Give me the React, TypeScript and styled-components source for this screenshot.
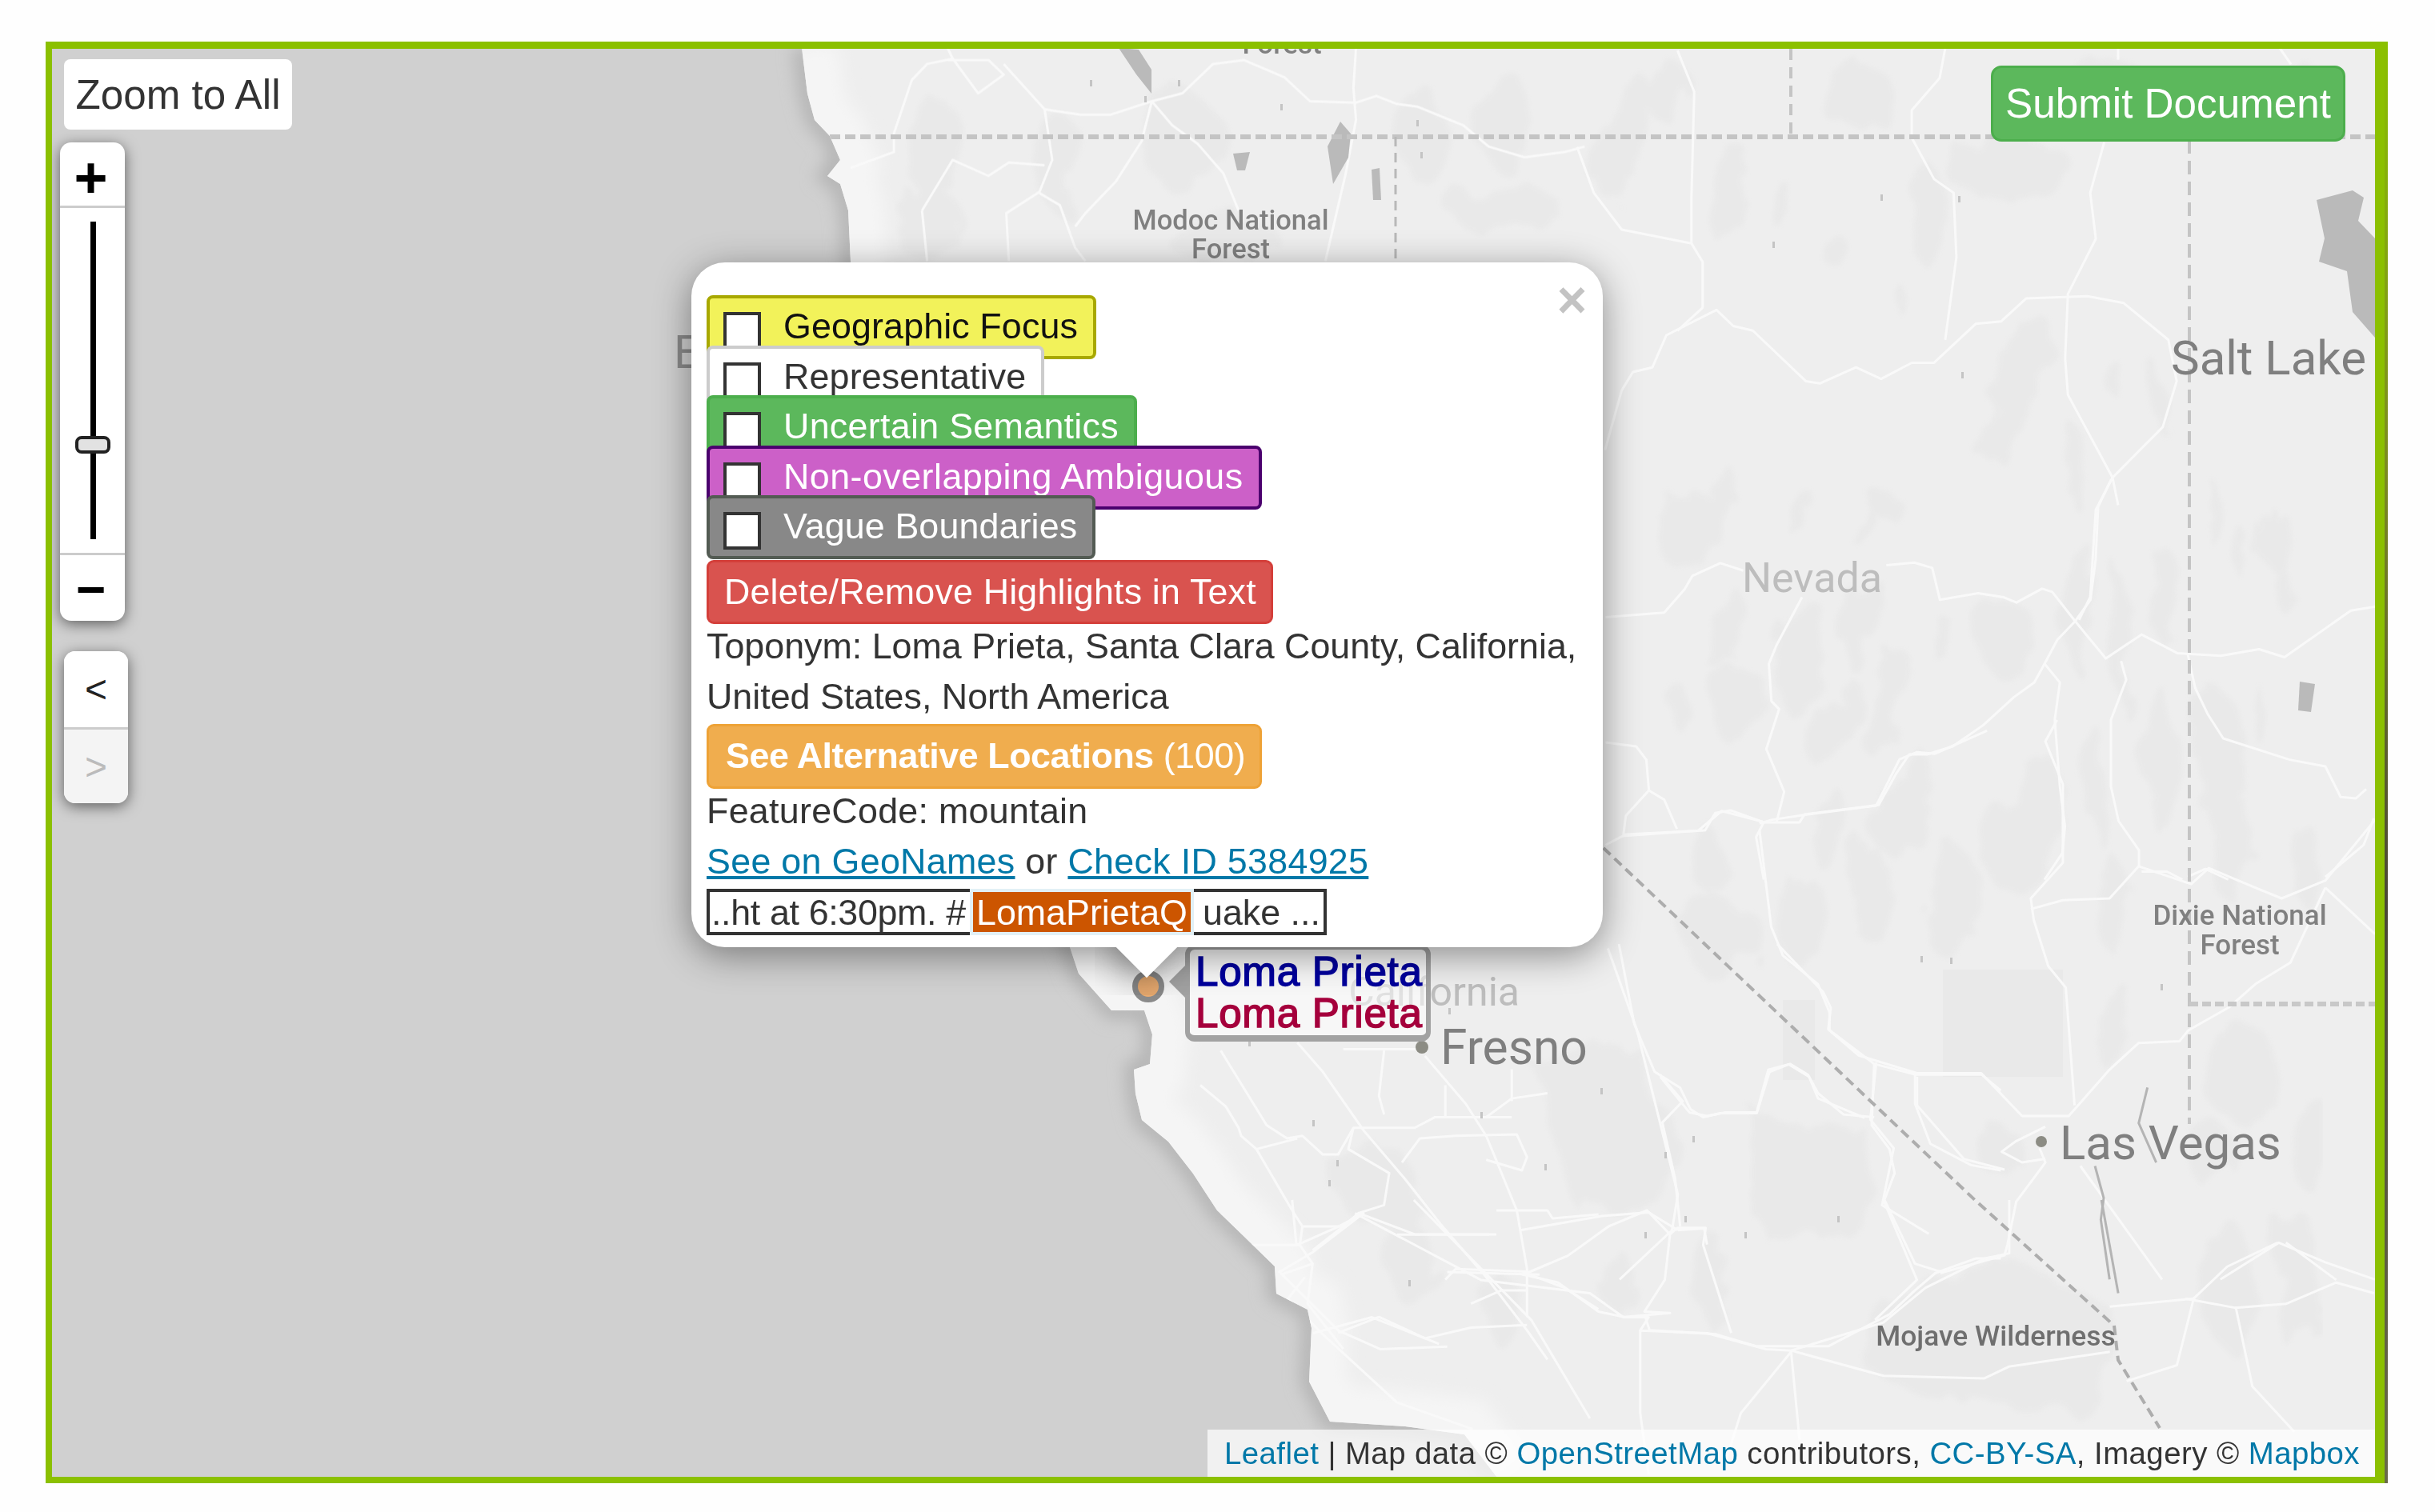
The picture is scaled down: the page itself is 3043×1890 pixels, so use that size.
import React from "react";
import styled, { createGlobalStyle } from "styled-components";

const Global = createGlobalStyle`
  html, body { margin: 0; padding: 0; background: #fefefe; }
  body { font-family: "Liberation Sans", Arial, sans-serif; color: #333; }
`;

const Frame = styled.div`
  position: relative;
  box-sizing: content-box;
  width: 2903px;
  height: 1785px;
  margin: 52px 0 0 57px;
  border: solid #8bc000;
  border-width: 9px 12px 8px 8px;
  &::after {
    content: "";
    position: absolute;
    top: -9px;
    bottom: -8px;
    right: -16px;
    width: 4px;
    background: linear-gradient(#8bc000, #7c8a20 30%, #4a4636 60%, #6a6a4a);
  }
`;

const MapArea = styled.div`
  position: relative;
  width: 100%;
  height: 100%;
  overflow: hidden;
  background: #d0d0d0;
`;

const MapSvg = styled.svg`
  position: absolute;
  inset: 0;
  width: 100%;
  height: 100%;
`;

const Road = styled.path`
  fill: none;
  stroke: #f9f9f9;
  stroke-width: 3;
  stroke-linejoin: round;
  vector-effect: non-scaling-stroke;
`;

const RiverLine = styled.path`
  fill: none;
  stroke: #b4b4b4;
  stroke-width: 3;
  vector-effect: non-scaling-stroke;
`;

const Border = styled.path<{ $w: number; $dash: string; $c: string }>`
  fill: none;
  stroke: ${(p) => p.$c};
  stroke-width: ${(p) => p.$w};
  stroke-dasharray: ${(p) => p.$dash};
`;

const Label = styled.text<{ $size: number; $color: string; $weight?: number; $sp?: number }>`
  font-family: Roboto, "Liberation Sans", sans-serif;
  font-size: ${(p) => p.$size}px;
  font-weight: ${(p) => p.$weight ?? 400};
  fill: ${(p) => p.$color};
  letter-spacing: ${(p) => p.$sp ?? 0}px;
`;

const ZoomAll = styled.button`
  position: absolute;
  left: 15px;
  top: 13px;
  width: 285px;
  height: 88px;
  padding: 0;
  border: 0;
  border-radius: 8px;
  background: #fff;
  font: 51.2px "Liberation Sans", sans-serif;
  color: #333;
`;

const ControlBar = styled.div<{ $left: number; $top: number; $width: number }>`
  position: absolute;
  left: ${(p) => p.$left}px;
  top: ${(p) => p.$top}px;
  width: ${(p) => p.$width}px;
  display: flex;
  flex-direction: column;
  border-radius: 14px;
  overflow: hidden;
  background: #fff;
  box-shadow: 0 4px 18px rgba(0, 0, 0, 0.55);
`;

const ZoomButton = styled.div<{ $h: number; $size: number; $pt: number }>`
  height: ${(p) => p.$h}px;
  display: flex;
  align-items: center;
  justify-content: center;
  box-sizing: border-box;
  font: bold ${(p) => p.$size}px/1 "Liberation Sans", sans-serif;
  color: #000;
  padding: ${(p) => p.$pt}px 4px 0 0;
`;

const SliderArea = styled.div`
  position: relative;
  height: 437px;
  border-top: 3px solid #ccc;
  border-bottom: 3px solid #ccc;
  box-sizing: border-box;
`;

const SliderTrack = styled.div`
  position: absolute;
  left: 38px;
  top: 17px;
  width: 7px;
  height: 397px;
  background: #000;
`;

const SliderKnob = styled.div`
  position: absolute;
  left: 19px;
  top: 285px;
  width: 44px;
  height: 22px;
  box-sizing: border-box;
  border: 4px solid #222;
  border-radius: 8px;
  background: #e2e2e2;
`;

const NavButton = styled.div<{ $disabled?: boolean }>`
  height: 95px;
  display: flex;
  align-items: center;
  justify-content: center;
  font: 48px "Liberation Sans", sans-serif;
  color: ${(p) => (p.$disabled ? "#bbb" : "#222")};
  background: ${(p) => (p.$disabled ? "#f4f4f4" : "#fff")};
  border-top: ${(p) => (p.$disabled ? "3px solid #ccc" : "0")};
  box-sizing: border-box;
`;

const Submit = styled.button`
  position: absolute;
  right: 37px;
  top: 21px;
  width: 443px;
  height: 95px;
  padding: 0;
  border: 3px solid #4cae4c;
  border-radius: 13px;
  background: #5cb85c;
  color: #fff;
  font: 51.2px "Liberation Sans", sans-serif;
`;

const Attribution = styled.div`
  position: absolute;
  right: 0;
  bottom: 0;
  width: 1459px;
  height: 59px;
  box-sizing: border-box;
  padding-right: 19px;
  background: rgba(255, 255, 255, 0.7);
  color: #333;
  font: 38.4px/59px "Liberation Sans", sans-serif;
  letter-spacing: 0.44px;
  text-align: right;
  white-space: nowrap;
`;

const MapLink = styled.span`
  color: #0078a8;
`;

const Marker = styled.div`
  position: absolute;
  left: 1350px;
  top: 1152px;
  width: 40px;
  height: 40px;
  box-sizing: border-box;
  border: 7px solid #8a8a8a;
  border-radius: 50%;
  background: #e9ab70;
`;

const Tooltip = styled.div`
  position: absolute;
  left: 1416px;
  top: 1120px;
  width: 307px;
  height: 121px;
  box-sizing: border-box;
  padding: 2px 0 0 7px;
  border: 6px solid #a2a2a2;
  border-bottom-width: 8px;
  border-radius: 12px;
  background: rgba(255, 255, 255, 0.55);
  font: 51.2px/52px "Liberation Sans", sans-serif;
  letter-spacing: 0.7px;
  -webkit-text-stroke: 1.5px currentColor;
  white-space: nowrap;
  &::before {
    content: "";
    position: absolute;
    left: -26px;
    top: 20px;
    border: solid transparent;
    border-width: 20px 20px 20px 0;
    border-right-color: #a2a2a2;
  }
`;

const TipLine = styled.div<{ $c: string }>`
  color: ${(p) => p.$c};
`;

const Popup = styled.div`
  position: absolute;
  left: 799px;
  top: 267px;
  width: 1139px;
  height: 856px;
  box-sizing: border-box;
  padding: 41px 19px 0;
  border-radius: 42px;
  background: #fff;
  box-shadow: 0 10px 46px rgba(0, 0, 0, 0.42);
  font: 44.8px/62.72px "Liberation Sans", sans-serif;
  color: #333;
  display: flex;
  flex-direction: column;
  align-items: flex-start;
`;

const Close = styled.div`
  position: absolute;
  top: 18px;
  right: 20px;
  font: bold 64px/58px "Liberation Sans", sans-serif;
  color: #c3c3c3;
`;

const TipClip = styled.div`
  position: absolute;
  left: 504px;
  top: 856px;
  width: 130px;
  height: 60px;
  overflow: hidden;
`;

const TipSquare = styled.div`
  width: 54px;
  height: 54px;
  margin: -27px auto 0;
  transform: rotate(45deg);
  background: #fff;
  box-shadow: 0 10px 46px rgba(0, 0, 0, 0.42);
`;

const Tag = styled.label<{ $bg: string; $border: string; $color: string; $sp?: number }>`
  display: flex;
  align-items: flex-start;
  box-sizing: border-box;
  height: 80px;
  margin-bottom: -17.4px;
  padding-right: 19px;
  border: 4px solid ${(p) => p.$border};
  border-radius: 8px;
  background: ${(p) => p.$bg};
  color: ${(p) => p.$color};
  letter-spacing: ${(p) => p.$sp ?? 0}px;
  line-height: 62.72px;
  white-space: nowrap;
`;

const Check = styled.span`
  flex: none;
  box-sizing: border-box;
  width: 47px;
  height: 47px;
  margin: 17px 28px 0 17px;
  border: 4px solid #333;
  background: #fff;
`;

const TagText = styled.span`
  margin-top: 3px;
`;

const ActionButton = styled.div<{ $bg: string; $border: string; $mt: number; $h: number; $sp: number; $pl: number }>`
  box-sizing: border-box;
  height: ${(p) => p.$h}px;
  margin-top: ${(p) => p.$mt}px;
  padding: 0 18px 0 ${(p) => p.$pl}px;
  border: 3px solid ${(p) => p.$border};
  border-radius: 9px;
  background: ${(p) => p.$bg};
  color: #fff;
  letter-spacing: ${(p) => p.$sp}px;
  line-height: ${(p) => p.$h - 8}px;
  white-space: nowrap;
`;

const Strong = styled.b`
  font-weight: 700;
`;

const TextLine = styled.div<{ $mt?: number; $sp?: number }>`
  margin-top: ${(p) => p.$mt ?? 0}px;
  letter-spacing: ${(p) => p.$sp ?? 0}px;
  white-space: nowrap;
`;

const Anchor = styled.a`
  color: #0078a8;
  text-decoration: underline;
`;

const ContextRow = styled.div`
  display: flex;
  height: 58px;
  margin-top: 3px;
  line-height: 58px;
  white-space: nowrap;
`;

const ContextPart = styled.span<{ $side: "left" | "right" }>`
  box-sizing: border-box;
  width: ${(p) => (p.$side === "left" ? 329 : 166)}px;
  padding: ${(p) => (p.$side === "left" ? "0 0 0 2px" : "0 0 0 11px")};
  letter-spacing: ${(p) => (p.$side === "left" ? -0.35 : 0)}px;
  border: 4px solid #333;
  border-${(p) => (p.$side === "left" ? "right" : "left")}: 0;
  line-height: 50px;
`;

const Highlight = styled.span`
  box-sizing: border-box;
  width: 280px;
  padding-left: 4px;
  border: 4px solid #e2f0f6;
  background: #cc5500;
  color: #fff;
  line-height: 50px;
`;

const roads4 = [
  "30 320 L60 420 L110 500 L235 530 L255 570 L255 670 L210 720",
  "80 980 L110 850 L130 810 L165 800 L190 730 L280 675 L310 710 L345 720 L440 830 L465 835 L530 800 L575 825 L630 790 L670 790 L745 705 L790 700 L835 650 L945 645 L1010 660 L1090 740 L1105 830 L1080 930 L990 1040 L960 1110 L950 1300 L930 1350",
  "210 110 L240 200 L235 430 L235 530",
  "690 105 L680 170 L630 240 L630 300 L670 390 L705 420 L710 560 L690 740",
  "975 310 L950 420 L960 520 L910 640 L905 780 L910 860 L990 1040 L1000 1100",
  "1000 105 L1000 130",
  "1290 105 L1310 140",
];
const roads11 = [
  "10 515 L125 498 L165 410 L180 360 L235 312 L280 340",
  "560 320 L615 310 L650 330 L665 450 L740 425 L790 440 L815 460 L865 408 L885 420 L930 530 L990 670 L1060 580 L1130 650 L1215 660 L1290 635 L1340 665 L1470 490 L1518 475",
  "395 440 L345 620 L330 690 L335 830 L350 860 L325 1010 L360 1170 L345 1285",
  "930 530 L895 600 L870 690 L850 760 L810 815 L790 850 L750 920 L690 1000 L640 1030 L605 1030 L580 1100 L545 1220 L400 1255 L390 1285 L320 1285 L255 1240 L225 1250 L205 1315 L50 1330 L10 1370",
  "95 1165 L90 1050 L70 1000 L10 985",
  "95 1165 L50 1260 L45 1330",
  "95 1165 L125 1200 L150 1310",
  "320 1285 L305 1340 L320 1500",
  "870 690 L900 760 L890 900 L900 1150 L910 1300 L905 1400 L870 1500",
  "1000 0 L975 100 L970 300 L960 450 L930 530",
  "1020 680 L1030 750 L1000 900 L1000 1150 L1015 1280 L1055 1390 L1055 1450",
  "1150 650 L1165 780 L1190 880 L1220 970 L1350 1050 L1420 1075 L1450 1190 L1480 1195 L1500 1160",
  "1515 1270 L1495 1370 L1420 1490",
  "1060 1470 L1110 1470 L1140 1500",
  "1150 1490 L1185 1460 L1230 1500",
];
const roads6 = [
  "410 290 L430 280 L490 265 L610 240 L650 110 L680 90 L710 95 L800 30",
  "175 325 L305 310 L345 255 L415 285",
  "410 310 L430 580 L450 660 L510 740 L530 820 L530 870 L580 940 L680 990 L790 990 L860 1110 L940 1110 L1010 980 L1060 905 L1130 900 L1145 870 L1215 805 L1260 740 L1320 680 L1380 470",
  "875 530 L930 505 L1010 500 L1060 410 L1150 460 L1180 415 L1260 470 L1305 500 L1380 450 L1465 280",
  "1380 470 L1465 600",
  "950 1080 L935 750 L905 690 L880 560 L875 500 L930 400 L930 180 L900 60 L920 0",
  "150 640 L200 870 L270 1330 L260 1430 L170 1568",
  "270 1430 L315 1425 L320 1470",
  "610 960 L600 1120 L640 1200 L620 1360 L700 1440",
  "680 1000 L680 1080 L760 1230 L830 1260",
  "900 1140 L850 1180 L825 1210 L860 1240 L900 1230",
  "890 1200 L900 1240 L850 1350 L835 1470 L830 1500 L720 1550",
  "960 1250 L1100 1568",
  "240 1000 L290 1100 L320 1110 L350 1100 L405 1100 L425 980 L460 965 L495 1000 L510 1060 L590 1115",
  "0 1430 L140 1390 L220 1380 L270 1430",
  "1200 1568 L1300 1465 L1380 1520 L1465 1568",
];
const roads10 = [
  "190 370 L240 480 L320 700 L400 880 L470 1050 L560 1250 L640 1450 L680 1560",
  "440 420 L520 600 L560 720 L620 1000 L640 1220 L640 1400",
  "40 400 L130 680 L170 730 L200 720 L240 790 L270 790 L300 690 L320 690 L420 690 L460 650 L610 650",
  "0 530 L50 610 L75 690 L80 720 L110 770 L190 730",
  "110 770 L180 1000 L200 1060 L280 1060 L310 1010 L420 1090 L580 1090",
  "200 1060 L195 1130 L220 1200 L160 1240",
  "195 1130 L100 1130",
  "280 1060 L220 1150",
  "220 1200 L210 1350 L280 1520",
  "300 690 L290 770 L370 860 L360 980 L310 1010",
  "395 820 L430 730 L500 720 L620 715 L640 800 L630 850 L560 810",
  "360 640 L350 570 L360 400",
  "280 395 L430 395",
  "480 530 L480 650 L560 650 L610 580 L680 560",
  "610 470 L610 590",
  "630 1240 L700 1270 L780 1380 L830 1400 L920 1385 L870 1380 L910 1260 L920 1090 L875 1000 L800 1060 L720 1170 L640 1235",
  "870 1390 L880 1450 L1010 1465 L1090 1510 L1230 1510 L1350 1390 L1400 1300 L1440 1235 L1520 1180 L1568 1180",
  "920 1090 L935 1065 L990 1065 L985 1130 L1040 1460",
  "480 1260 L500 1220 L640 1230",
  "530 1350 L590 1300 L640 1300",
  "270 1460 L350 1400 L440 1480 L530 1440 L640 1430",
  "580 1000 L680 1000 L690 1030 L780 1015",
  "820 0 L850 300 L890 480 L940 540 L960 620 L985 650 L1020 635 L1090 635 L1115 480 L1155 450 L1190 490 L1210 560 L1260 640 L1320 650",
  "900 490 L945 590 L905 670 L930 880 L940 1060",
  "1130 0 L1220 180 L1235 240 L1230 320 L1320 450 L1400 490 L1530 490 L1568 550",
  "1320 450 L1315 680 L1350 770 L1360 860 L1340 960 L1400 1200 L1450 1230",
  "1400 490 L1400 600 L1430 750 L1510 830 L1568 850",
];
const roads9 = [
  "320 30 L330 70 L280 90 L250 150 L215 350 L215 420 L130 480",
  "330 70 L380 200 L430 130 L400 75 L320 75",
  "430 90 L510 260 L525 450 L500 570 L435 650 L440 830",
  "510 260 L580 280 L640 280 L720 230 L780 200 L840 90 L900 75 L980 140 L1030 230 L1120 235 L1160 210 L1200 240 L1240 250 L1330 320 L1380 400 L1450 440 L1530 420 L1568 400",
  "720 230 L700 380 L650 530 L590 650 L570 700",
  "720 230 L760 320 L810 390 L860 500 L890 640",
  "270 640 L330 450 L400 510 L440 460 L510 470",
  "270 640 L280 830",
  "500 575 L540 620 L570 780 L590 830",
  "1120 30 L1115 180 L1120 300 L1100 500 L1060 830",
];
const roads5 = [
  "280 50 L430 300 L560 350 L600 440 L630 440 L620 490 L700 500 L770 560 L800 565 L910 460 L960 330 L1030 220 L1060 200 L1060 0",
  "800 565 L910 660 L1030 670 L1060 625 L1180 570",
  "350 0 L490 450 L560 820",
  "205 0 L210 170 L260 100 L290 50 L230 195 L190 270 L260 490 L310 560 L390 550",
  "800 570 L740 800 L720 1000",
  "800 570 L810 900",
  "480 270 L530 330 L570 410",
  "620 490 L620 800 L630 1030",
  "1270 370 L1330 405 L1390 390 L1450 310 L1495 350",
  "1380 160 L1320 250 L1280 370 L1260 620 L1200 680",
  "1390 160 L1450 300",
  "1330 400 L1350 700 L1400 870",
  "1180 400 L1280 370",
  "910 0 L950 300 L900 450",
  "220 290 L200 370 L240 500 L330 760 L420 860",
  "390 270 L500 280",
  "330 130 L440 130",
  "160 170 L210 170",
  "230 500 L300 440 L380 540",
];

const blobs: [number, number, number, number, number][] = [
  [2160, 240, 25, 60, 15], [2230, 260, 14, 30, 0], [2410, 270, 20, 65, 0], [2510, 210, 80, 40, 0],
  [2290, 310, 18, 25, -30], [2368, 367, 10, 15, 0], [2520, 490, 25, 100, 20], [2590, 580, 14, 50, 0],
  [2700, 500, 10, 40, 0], [2640, 470, 12, 20, 0], [2354, 630, 20, 15, 0], [2150, 610, 15, 30, 15],
  [2105, 670, 30, 40, 20], [2765, 640, 8, 40, 0], [2835, 670, 10, 40, 0], [2855, 740, 12, 25, 0],
  [2918, 490, 10, 30, 0], [2172, 880, 32, 50, 10], [2160, 790, 22, 50, 20], [2250, 820, 28, 70, 15],
  [2290, 900, 25, 60, 20], [2330, 780, 20, 60, 15], [2360, 880, 22, 70, 15], [2430, 800, 12, 30, 0],
  [2510, 800, 35, 50, 0], [2600, 760, 15, 80, 5], [2650, 800, 12, 90, 0], [2700, 740, 20, 60, 0],
  [2700, 950, 20, 90, 0], [2770, 950, 25, 90, 0], [2620, 980, 15, 70, 0], [2550, 1000, 30, 60, 0],
  [2520, 1060, 40, 60, 0], [2400, 980, 20, 40, 0], [2095, 880, 15, 30, -10], [2130, 650, 15, 40, 20],
  [2250, 640, 14, 30, 15], [2330, 660, 10, 25, 15], [2810, 700, 10, 30, 0], [2850, 680, 15, 40, 0],
  [2820, 890, 8, 35, 0], [2370, 1020, 30, 50, 10], [2290, 1040, 25, 50, 10], [2140, 1080, 20, 40, 0],
  [2150, 1170, 50, 50, 0], [2250, 1150, 30, 60, 0], [2440, 1130, 40, 70, 0], [2340, 1120, 25, 60, 0],
  [2640, 1130, 20, 60, 0], [2790, 1060, 25, 70, 0], [2880, 1080, 20, 50, 0], [2640, 1280, 20, 60, 0],
  [2800, 1340, 50, 60, 0], [2890, 1430, 30, 60, 0], [2760, 1440, 30, 40, 0], [2500, 1440, 25, 35, 0],
  [2780, 1600, 30, 80, 0], [2870, 1600, 25, 90, 0], [2920, 1650, 20, 70, 0], [1720, 1480, 50, 50, 30],
  [1760, 1560, 30, 70, 0], [1880, 1640, 30, 40, 0], [2140, 1600, 20, 60, 0], [2020, 1600, 18, 40, 0],
  [1170, 190, 30, 70, 0], [1320, 200, 30, 60, 0], [1480, 180, 50, 60, 0], [1780, 170, 30, 60, 0],
  [1880, 150, 40, 60, 0], [1160, 280, 50, 40, 0], [1880, 260, 70, 30, 0], [1530, 300, 70, 30, 0],
  [2030, 170, 30, 80, 15], [2090, 120, 30, 40, 0], [2320, 120, 50, 40, 0], [2620, 100, 60, 30, 0],
  [2880, 120, 30, 40, 0],
];

const lakes = [
  "2895,250 2940,238 2954,247 2947,276 2968,298 2968,422 2940,390 2933,339 2898,327 2905,298",
  "2874,852 2893,855 2888,890 2872,888",
  "1659,183 1675,152 1688,167 1685,197 1666,230",
  "1398,60 1423,62 1439,87 1439,117 1420,93",
  "1541,192 1562,190 1556,213 1546,213",
  "1714,212 1724,210 1726,250 1716,250",
];

const specks: [number, number][] = [
  [1472, 100], [1430, 120], [1362, 100], [1770, 150], [1775, 190], [1600, 130], [2350, 243], [2215, 302],
  [2447, 245], [2451, 465], [2400, 1195], [2437, 1197], [2000, 1360], [1920, 1300], [2115, 1420], [1810, 1260],
  [2080, 1440], [1670, 1450], [1850, 1390], [1930, 1455], [2105, 1520], [2055, 1540], [2180, 1540], [2296, 1520],
  [1760, 1600], [1560, 1300], [1640, 1400], [1660, 1475], [2700, 1230],
];

const coast =
  "M1002 60 L1009 117 L1018 150 L1037 170 L1050 200 L1034 220 L1050 230 L1060 263 L1063 327 L1120 600 L1250 900 L1338 1187 L1348 1217 L1389 1263 L1430 1263 L1440 1293 L1437 1330 L1417 1337 L1419 1367 L1427 1400 L1460 1427 L1491 1467 L1521 1513 L1552 1543 L1593 1583 L1595 1617 L1634 1637 L1639 1660 L1636 1727 L1662 1777 L1756 1783 L1830 1793 L1871 1847";
const land = coast + " L2968 1847 L2968 60 Z";

function RoadGroup({ t, list }: { t: string; list: string[] }) {
  return (
    <g transform={t}>
      {list.map((d, i) => (
        <Road key={i} d={`M${d}`} />
      ))}
    </g>
  );
}

function BaseMap() {
  return (
    <MapSvg viewBox="65 61 2903 1785" xmlns="http://www.w3.org/2000/svg">
      <defs>
        <filter id="soft" x="-20%" y="-20%" width="140%" height="140%">
          <feGaussianBlur stdDeviation="10" />
        </filter>
        <filter id="relief" x="0" y="0" width="100%" height="100%" filterUnits="userSpaceOnUse">
          <feTurbulence type="fractalNoise" baseFrequency="0.018 0.012" numOctaves="3" seed="7" result="n" />
          <feDisplacementMap in="SourceGraphic" in2="n" scale="55" />
          <feGaussianBlur stdDeviation="2.5" />
        </filter>
        <clipPath id="landClip">
          <path d={land} />
        </clipPath>
      </defs>
      <path d={coast} fill="none" stroke="#b4b4b4" strokeWidth="22" filter="url(#soft)" />
      <path d={land} fill="#eeeeee" />
      <g clipPath="url(#landClip)">
        <path d={coast} fill="none" stroke="#f5f5f5" strokeWidth="90" filter="url(#soft)" />
        <g fill="#e9e9e9" filter="url(#relief)">
          {blobs.map(([x, y, rx, ry, r], i) => (
            <ellipse key={i} cx={x} cy={y} rx={rx} ry={ry} transform={`rotate(${r} ${x} ${y})`} />
          ))}
          <path d="M1915 1330 L2040 1300 L2093 1420 L2085 1513 L1960 1500 Z" />
          <path d="M2200 1397 L2330 1410 L2355 1500 L2290 1540 L2200 1540 Z" />
          <path d="M2343 1650 L2322 1700 L2375 1740 L2636 1767 L2647 1690 L2636 1633 L2511 1570 L2405 1610 Z" />
        </g>
        <g fill="#e9e9e9">
          <rect x="2428" y="1212" width="150" height="134" />
          <rect x="2228" y="1250" width="40" height="100" />
        </g>
        <RoadGroup t="translate(1950 0) scale(.697 .574)" list={roads4} />
        <RoadGroup t="translate(2000 600) scale(.638 .333)" list={roads11} />
        <RoadGroup t="translate(1900 900) scale(.729 .446)" list={roads6} />
        <RoadGroup t="translate(1500 1180) scale(.638 .333)" list={roads10} />
        <RoadGroup t="translate(980 50) scale(.638 .333)" list={roads9} />
        <RoadGroup t="translate(1400 1500) scale(1.048 .333)" list={roads5} />
        <g fill="#bababa">
          {lakes.map((p, i) => (
            <polygon key={i} points={p} />
          ))}
        </g>
        <g fill="#c4c4c4">
          {specks.map(([x, y], i) => (
            <rect key={i} x={x} y={y} width="3" height="8" />
          ))}
        </g>
        <g transform="translate(1900 900) scale(.729 .446)">
          <RiverLine d="M1075 1030 L1060 1130 L1090 1240" />
          <RiverLine d="M985 1250 L1000 1340 L995 1400 L1010 1568" />
        </g>
        <g transform="translate(1400 1500) scale(1.048 .333)">
          <RiverLine d="M1170 0 L1190 350" />
        </g>
        <Border d="M1037 171 L2968 171" $w={6} $dash="13 6" $c="#c4c4c4" />
        <Border d="M2238 61 L2238 171" $w={4} $dash="14 9" $c="#c4c4c4" />
        <Border d="M1744 171 L1744 330" $w={3} $dash="12 8" $c="#b8b8b8" />
        <Border d="M2736 175 L2736 1405" $w={4} $dash="17 9" $c="#c4c4c4" />
        <Border d="M2736 1255 L2968 1255" $w={6} $dash="11 5" $c="#c8c8c8" />
        <Border d="M1990 1047 L2468 1500 L2642 1657 L2647 1700 L2699 1785" $w={4} $dash="12 7" $c="#adadad" />
      </g>
      <circle cx="1777" cy="1309" r="8" fill="#8c8c84" />
      <circle cx="2551" cy="1427" r="7" fill="#8c8c84" />
      <Label x="1602" y="67" textAnchor="middle" $size={35} $color="#808080" $weight={500}>Forest</Label>
      <Label x="1538" y="287" textAnchor="middle" $size={34.5} $color="#808080" $weight={500}>Modoc National</Label>
      <Label x="1538" y="323" textAnchor="middle" $size={34.5} $color="#808080" $weight={500}>Forest</Label>
      <Label x="842" y="460" $size={58} $color="#8a8a8a">Eureka</Label>
      <Label x="2713" y="468" $size={60} $color="#7f7f7f">Salt Lake</Label>
      <Label x="2177" y="740" $size={52} $color="#bdbdbd">Nevada</Label>
      <Label x="2799" y="1156" textAnchor="middle" $size={35} $color="#808080" $weight={500}>Dixie National</Label>
      <Label x="2799" y="1193" textAnchor="middle" $size={35} $color="#808080" $weight={500}>Forest</Label>
      <Label x="1899" y="1257" textAnchor="end" $size={50} $color="#bdbdbd">California</Label>
      <Label x="1800" y="1330" $size={60.5} $color="#7f7f7f">Fresno</Label>
      <Label x="2574" y="1449" $size={60} $color="#7f7f7f">Las Vegas</Label>
      <Label x="2494" y="1682" textAnchor="middle" $size={35.4} $color="#6f6f6f" $weight={500}>Mojave Wilderness</Label>
    </MapSvg>
  );
}

export default function App() {
  return (
    <>
      <Global />
      <Frame>
        <MapArea>
          <BaseMap />
          <Marker />
          <Tooltip>
            <TipLine $c="#00009c">Loma Prieta</TipLine>
            <TipLine $c="#a5003c">Loma Prieta</TipLine>
          </Tooltip>
          <ZoomAll>Zoom to All</ZoomAll>
          <ControlBar $left={10} $top={117} $width={81}>
            <ZoomButton $h={79} $size={72} $pt={8}>+</ZoomButton>
            <SliderArea>
              <SliderTrack />
              <SliderKnob />
            </SliderArea>
            <ZoomButton $h={82} $size={64} $pt={4}>−</ZoomButton>
          </ControlBar>
          <ControlBar $left={15} $top={753} $width={80}>
            <NavButton>&lt;</NavButton>
            <NavButton $disabled>&gt;</NavButton>
          </ControlBar>
          <Submit>Submit Document</Submit>
          <Popup>
            <Close>×</Close>
            <Tag $bg="#f2f25a" $border="#a8a800" $color="#111" $sp={0.12}>
              <Check />
              <TagText>Geographic Focus</TagText>
            </Tag>
            <Tag $bg="#fff" $border="#ccc" $color="#333" $sp={0.15}>
              <Check />
              <TagText>Representative</TagText>
            </Tag>
            <Tag $bg="#5cb85c" $border="#4cae4c" $color="#fff" $sp={0.3}>
              <Check />
              <TagText>Uncertain Semantics</TagText>
            </Tag>
            <Tag $bg="#cc60c8" $border="#4b006e" $color="#fff" $sp={0.47}>
              <Check />
              <TagText>Non-overlapping Ambiguous</TagText>
            </Tag>
            <Tag $bg="#888888" $border="#535b53" $color="#fff" $sp={0.12}>
              <Check />
              <TagText>Vague Boundaries</TagText>
            </Tag>
            <ActionButton $bg="#d9534f" $border="#d43f3a" $mt={18} $h={80} $sp={0.18} $pl={19}>
              Delete/Remove Highlights in Text
            </ActionButton>
            <TextLine $mt={-4}>Toponym: Loma Prieta, Santa Clara County, California,</TextLine>
            <TextLine>United States, North America</TextLine>
            <ActionButton $bg="#f0ad4e" $border="#eea236" $mt={4} $h={81} $sp={-0.45} $pl={21}>
              <Strong>See Alternative Locations</Strong> (100)
            </ActionButton>
            <TextLine $mt={-4} $sp={0.28}>FeatureCode: mountain</TextLine>
            <TextLine $sp={0.3}>
              <Anchor>See on GeoNames</Anchor> or <Anchor>Check ID 5384925</Anchor>
            </TextLine>
            <ContextRow>
              <ContextPart $side="left">..ht at 6:30pm. #</ContextPart>
              <Highlight>LomaPrietaQ</Highlight>
              <ContextPart $side="right">uake ...</ContextPart>
            </ContextRow>
            <TipClip>
              <TipSquare />
            </TipClip>
          </Popup>
          <Attribution>
            <MapLink>Leaflet</MapLink> | Map data © <MapLink>OpenStreetMap</MapLink> contributors,{" "}
            <MapLink>CC-BY-SA</MapLink>, Imagery © <MapLink>Mapbox</MapLink>
          </Attribution>
        </MapArea>
      </Frame>
    </>
  );
}
